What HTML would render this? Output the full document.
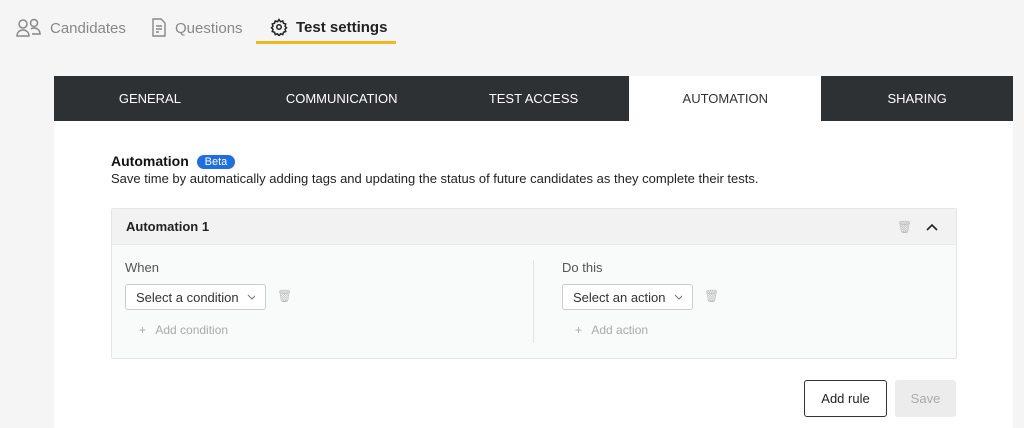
<!DOCTYPE html>
<html><head><meta charset="utf-8"><style>
*{box-sizing:border-box;margin:0;padding:0}
body{width:1024px;height:428px;background:#f5f5f5;font-family:"Liberation Sans",sans-serif;position:relative;overflow:hidden}
.abs{position:absolute}
.nav{font-size:15px;color:#888;top:18px;display:flex;align-items:center;gap:8px}
.tabs{left:54px;top:76px;width:959px;height:45px;background:#2d3134;display:flex}
.tab{width:192px;display:flex;align-items:center;justify-content:center;color:#fff;font-size:13px}
.tab.act{background:#fff;color:#333}
.content{left:54px;top:121px;width:959px;height:307px;background:#fff}
.card{left:111px;top:208px;width:846px;height:151px;border:1px solid #e6e6e6;background:#f9fafa;border-radius:2px}
.chead{height:36px;background:#f2f2f2;border-bottom:1px solid #e8e8e8;font-weight:bold;font-size:13px;color:#222;padding:10px 14px}
.sel{height:26px;border:1px solid #ccc;border-radius:3px;background:#fff;font-size:13px;color:#333;display:flex;align-items:center;padding:0 10px;gap:8px;white-space:nowrap}
.lbl{font-size:13px;color:#555}
.add{font-size:12px;color:#aaa}
</style></head><body>
<div class="abs nav" style="left:16px">
<svg width="26" height="20" viewBox="0 0 26 20" fill="none" stroke="#888" stroke-width="1.5"><circle cx="7" cy="6" r="4"/><path d="M1 18c0-4 3-6 6-6s6 2 6 6z"/><circle cx="18" cy="5" r="3.5"/><path d="M15 11c1-1 2-1 3-1 3 0 6 2 6 6h-8"/></svg><span>Candidates</span></div>
<div class="abs nav" style="left:151px">
<svg width="16" height="20" viewBox="0 0 16 20" fill="none" stroke="#888" stroke-width="1.4"><path d="M2 1h8l4 4v13H2z"/><path d="M5 8h6M5 11h6M5 14h3"/></svg><span>Questions</span></div>
<div class="abs nav" style="left:270px;color:#222"><svg width="18" height="18" viewBox="0 0 24 24" fill="none" stroke="#222" stroke-width="2"><circle cx="12" cy="12" r="3"/><path d="M12 2l2 3 3-1 1 3 3 1-1 3 2 2-2 2 1 3-3 1-1 3-3-1-2 3-2-3-3 1-1-3-3-1 1-3-2-2 2-2-1-3 3-1 1-3 3 1z"/></svg><span style="font-weight:600;font-size:15px">Test settings</span></div>
<div class="abs" style="left:256px;top:41px;width:140px;height:3px;background:#f1b81c"></div>
<div class="abs tabs"><div class="tab">GENERAL</div><div class="tab">COMMUNICATION</div><div class="tab">TEST ACCESS</div><div class="tab act">AUTOMATION</div><div class="tab">SHARING</div></div>
<div class="abs content"></div>
<div class="abs" style="left:111px;top:153px;font-size:14px;font-weight:bold;color:#111">Automation <span style="display:inline-block;background:#1f6fe0;color:#fff;font-weight:normal;font-size:11px;border-radius:9px;padding:1px 8px;margin-left:4px;vertical-align:1px">Beta</span></div>
<div class="abs" style="left:111px;top:171px;font-size:13px;color:#222">Save time by automatically adding tags and updating the status of future candidates as they complete their tests.</div>
<div class="abs card"><div class="chead">Automation 1</div></div>
<div class="abs" style="left:897px;top:220px;color:#bbb;font-size:12px">🗑</div>
<div class="abs" style="left:926px;top:219px"><svg width="12" height="10"><path d="M1 8l5-5 5 5" stroke="#222" stroke-width="1.6" fill="none"/></svg></div>
<div class="abs" style="left:533px;top:260px;width:1px;height:83px;background:#e4e4e4"></div>
<div class="abs lbl" style="left:125px;top:260px">When</div>
<div class="abs lbl" style="left:562px;top:260px">Do this</div>
<div class="abs sel" style="left:125px;top:284px;width:141px">Select a condition <svg width="10" height="6"><path d="M1 1l4 4 4-4" stroke="#777" fill="none"/></svg></div>
<div class="abs sel" style="left:562px;top:284px;width:131px">Select an action <svg width="10" height="6"><path d="M1 1l4 4 4-4" stroke="#777" fill="none"/></svg></div>
<div class="abs" style="left:277px;top:289px;color:#bbb;font-size:12px">🗑</div>
<div class="abs" style="left:704px;top:289px;color:#bbb;font-size:12px">🗑</div>
<div class="abs add" style="left:139px;top:323px">+&nbsp;&nbsp; Add condition</div>
<div class="abs add" style="left:575px;top:323px">+&nbsp;&nbsp; Add action</div>
<div class="abs" style="left:804px;top:380px;width:83px;height:37px;border:1px solid #333;border-radius:3px;background:#fff;font-size:13px;color:#222;display:flex;align-items:center;justify-content:center">Add rule</div>
<div class="abs" style="left:895px;top:380px;width:61px;height:37px;border-radius:3px;background:#ececec;font-size:13px;color:#aaa;display:flex;align-items:center;justify-content:center">Save</div>
</body></html>
